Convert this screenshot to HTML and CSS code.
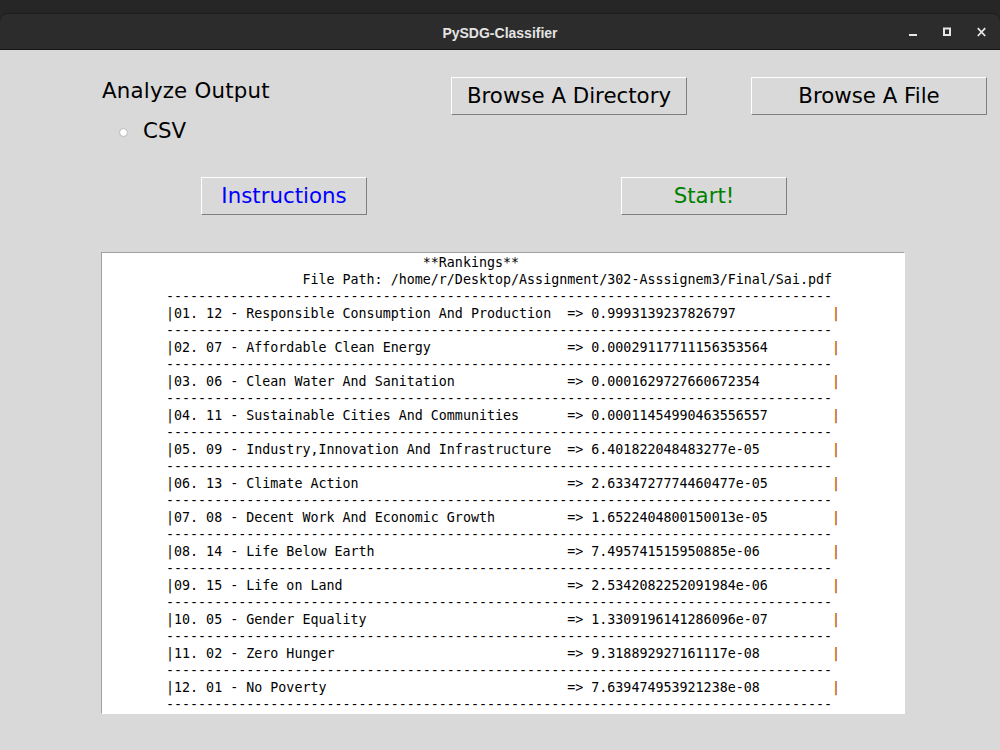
FILE: index.html
```html
<!DOCTYPE html>
<html lang="en">
<head>
<meta charset="utf-8">
<title>PySDG-Classifier</title>
<link rel="stylesheet" href="styles.css">
</head>
<body>
<div class="desktop">
  <div class="window">
    <header class="titlebar">
      <div class="spacer"></div>
      <div class="title">PySDG-Classifier</div>
      <div class="controls">
        <svg class="ctl" width="8" height="10" viewBox="0 0 8 10"><rect x="0" y="7" width="8" height="2" fill="#e6e6e6"/></svg>
        <svg class="ctl" width="8" height="10" viewBox="0 0 8 10"><rect x="1" y="1.5" width="6" height="6.5" fill="none" stroke="#e6e6e6" stroke-width="2"/></svg>
        <svg class="ctl" width="9" height="10" viewBox="0 0 9 10"><path d="M0.8 1.2 L8.2 9 M8.2 1.2 L0.8 9" stroke="#e6e6e6" stroke-width="1.8" fill="none"/></svg>
      </div>
    </header>
    <main class="app">
      <div class="top-row">
        <div class="output-group">
          <div class="group-label">Analyze Output</div>
          <div class="radio-row"><span class="radio"></span><span class="radio-text">CSV</span></div>
        </div>
        <button class="btn btn-dir">Browse A Directory</button>
        <button class="btn btn-file">Browse A File</button>
      </div>
      <div class="action-row">
        <button class="btn btn-action btn-instructions">Instructions</button>
        <button class="btn btn-action btn-start">Start!</button>
      </div>
      <div class="results">
        <div class="line heading">**Rankings**</div>
        <div class="line path">File Path: /home/r/Desktop/Assignment/302-Asssignem3/Final/Sai.pdf</div>
        <div class="line sep">-----------------------------------------------------------------------------------</div>
        <div class="line row"><span class="label">|01. 12 - Responsible Consumption And Production</span><span class="value">=&gt; 0.9993139237826797</span><span class="pipe">|</span></div>
        <div class="line sep">-----------------------------------------------------------------------------------</div>
        <div class="line row"><span class="label">|02. 07 - Affordable Clean Energy</span><span class="value">=&gt; 0.00029117711156353564</span><span class="pipe">|</span></div>
        <div class="line sep">-----------------------------------------------------------------------------------</div>
        <div class="line row"><span class="label">|03. 06 - Clean Water And Sanitation</span><span class="value">=&gt; 0.0001629727660672354</span><span class="pipe">|</span></div>
        <div class="line sep">-----------------------------------------------------------------------------------</div>
        <div class="line row"><span class="label">|04. 11 - Sustainable Cities And Communities</span><span class="value">=&gt; 0.00011454990463556557</span><span class="pipe">|</span></div>
        <div class="line sep">-----------------------------------------------------------------------------------</div>
        <div class="line row"><span class="label">|05. 09 - Industry,Innovation And Infrastructure</span><span class="value">=&gt; 6.401822048483277e-05</span><span class="pipe">|</span></div>
        <div class="line sep">-----------------------------------------------------------------------------------</div>
        <div class="line row"><span class="label">|06. 13 - Climate Action</span><span class="value">=&gt; 2.6334727774460477e-05</span><span class="pipe">|</span></div>
        <div class="line sep">-----------------------------------------------------------------------------------</div>
        <div class="line row"><span class="label">|07. 08 - Decent Work And Economic Growth</span><span class="value">=&gt; 1.6522404800150013e-05</span><span class="pipe">|</span></div>
        <div class="line sep">-----------------------------------------------------------------------------------</div>
        <div class="line row"><span class="label">|08. 14 - Life Below Earth</span><span class="value">=&gt; 7.495741515950885e-06</span><span class="pipe">|</span></div>
        <div class="line sep">-----------------------------------------------------------------------------------</div>
        <div class="line row"><span class="label">|09. 15 - Life on Land</span><span class="value">=&gt; 2.5342082252091984e-06</span><span class="pipe">|</span></div>
        <div class="line sep">-----------------------------------------------------------------------------------</div>
        <div class="line row"><span class="label">|10. 05 - Gender Equality</span><span class="value">=&gt; 1.3309196141286096e-07</span><span class="pipe">|</span></div>
        <div class="line sep">-----------------------------------------------------------------------------------</div>
        <div class="line row"><span class="label">|11. 02 - Zero Hunger</span><span class="value">=&gt; 9.318892927161117e-08</span><span class="pipe">|</span></div>
        <div class="line sep">-----------------------------------------------------------------------------------</div>
        <div class="line row"><span class="label">|12. 01 - No Poverty</span><span class="value">=&gt; 7.639474953921238e-08</span><span class="pipe">|</span></div>
        <div class="line sep">-----------------------------------------------------------------------------------</div>
      </div>
    </main>
  </div>
</div>
</body>
</html>
```

FILE: styles.css
```css
html, body {
  margin: 0;
  padding: 0;
  width: 1000px;
  height: 750px;
  overflow: hidden;
  background: #262626;
}

.desktop {
  height: 750px;
  padding-top: 13px;
  box-sizing: border-box;
}

.window {
  height: 737px;
  display: flex;
  flex-direction: column;
}

.titlebar {
  height: 37px;
  box-sizing: border-box;
  background: #2c2c2c;
  border-top: 1px solid #1c1c1c;
  border-bottom: 1px solid #161616;
  border-radius: 8px 8px 0 0;
  display: grid;
  grid-template-columns: 1fr auto 1fr;
  align-items: center;
}

.title {
  font-family: "Liberation Sans", Arial, sans-serif;
  font-weight: bold;
  font-size: 14px;
  padding-top: 2px;
  color: #e4e4e4;
}

.controls {
  display: flex;
  justify-content: flex-end;
  align-items: center;
  gap: 26px;
  padding-right: 14px;
}

.ctl {
  display: block;
}

.app {
  flex: 1;
  background: #d9d9d9;
  padding-top: 27px;
}

.top-row {
  display: flex;
  align-items: flex-start;
  padding-left: 102px;
}

.output-group {
  width: 349px;
  flex: none;
}

.group-label {
  font-family: "DejaVu Sans", sans-serif;
  font-size: 21.333px;
  letter-spacing: 0.2px;
  line-height: 25px;
  margin-top: 1px;
  color: #000;
}

.radio-row {
  display: flex;
  align-items: flex-start;
  margin-top: 15px;
  padding-left: 17px;
  gap: 15px;
  height: 25px;
}

.radio {
  width: 9px;
  height: 9px;
  box-sizing: border-box;
  margin-top: 10px;
  border-radius: 50%;
  background: #ffffff;
  border: 1px solid #b8b8b8;
}

.radio-text {
  font-family: "DejaVu Sans", sans-serif;
  font-size: 21.333px;
  line-height: 25px;
  color: #000;
}

.btn {
  font-family: "DejaVu Sans", sans-serif;
  font-size: 21.333px;
  background: #d9d9d9;
  color: #000;
  border: 1px solid;
  border-color: #ffffff #7e7e7e #7e7e7e #ffffff;
  height: 38px;
  padding: 0 0 2px 0;
  box-sizing: border-box;
  flex: none;
}

.btn-dir {
  width: 236px;
  margin-right: 64px;
}

.btn-file {
  width: 236px;
}

.action-row {
  display: flex;
  padding-left: 201px;
  gap: 254px;
  margin-top: 34px;
}

.btn-action {
  width: 166px;
}

.btn-instructions {
  color: #0000ff;
}

.btn-start {
  color: #008000;
}

.results {
  margin: 37px 0 0 101px;
  width: 804px;
  height: 462px;
  box-sizing: border-box;
  background: #ffffff;
  border: 1px solid;
  border-color: #a0a0a0 #ffffff #ffffff #a0a0a0;
  padding: 1px 0 0 64px;
  overflow: hidden;
  font-family: "DejaVu Sans Mono", monospace;
  font-size: 13.333px;
  line-height: 17px;
  color: #000;
}

.line {
  white-space: pre;
  height: 17px;
}

.heading {
  padding-left: 32ch;
}

.path {
  padding-left: 17ch;
}

.row {
  display: flex;
}

.label {
  width: 50ch;
  flex: none;
}

.value {
  width: 33ch;
  flex: none;
}

.pipe {
  color: #c0660f;
  font-weight: bold;
}
```
